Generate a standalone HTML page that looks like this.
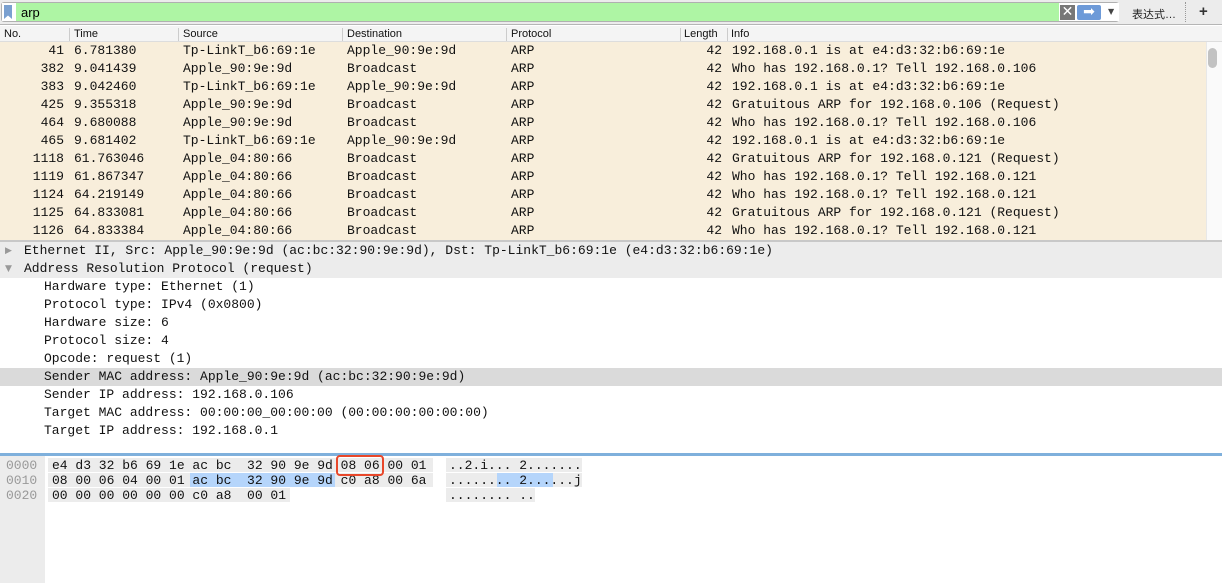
<!DOCTYPE html>
<html><head><meta charset="utf-8">
<style>
*{margin:0;padding:0;box-sizing:border-box}
body{width:1222px;height:583px;overflow:hidden;background:#fff;position:relative;font-family:"Liberation Mono",monospace;font-size:13px;color:#111}
.a{position:absolute;white-space:pre}
.s{font-family:"Liberation Sans","Noto Sans CJK SC",sans-serif;font-size:11px}
.row{position:absolute;left:0;width:1206px;height:18px;line-height:18px;background:#f8eedb}
.row span{position:absolute;white-space:pre}
.d{position:absolute;left:0;width:1222px;height:18px;line-height:18px;white-space:pre}
.hx{position:absolute;height:15px;line-height:15px;white-space:pre}
</style></head><body>
<!-- toolbar -->
<div class="a" style="left:0;top:0;width:1222px;height:25px;background:#ececec;border-bottom:1px solid #b5b5b5"></div>
<div class="a" style="left:1px;top:2px;width:1118px;height:20px;background:#aef5a4;border:1px solid #b0b0b0;border-radius:3px"></div>
<div class="a" style="left:2px;top:3px;width:14px;height:18px;background:#fff"></div>
<div class="a" style="left:4px;top:5px;width:8px;height:14px;background:#7aa0d0;clip-path:polygon(0 0,100% 0,100% 100%,50% 75%,0 100%)"></div>
<div class="a s" style="left:21px;top:5px;font-size:13px;color:#000">arp</div>
<div class="a" style="left:1059px;top:3px;width:60px;height:18px;background:#fff"></div>
<div class="a" style="left:1060px;top:5px;width:15px;height:15px;background:#777;color:#fff;font-family:'DejaVu Sans';font-size:14px;line-height:15px;text-align:center">✕</div>
<div class="a" style="left:1077px;top:5px;width:24px;height:15px;background:#6d9ad8;border-radius:2px;color:#fff;font-size:14px;line-height:14px;text-align:center;font-family:'DejaVu Sans'">➡</div>
<div class="a" style="left:1108px;top:7px;font-size:8px;color:#444;font-family:'DejaVu Sans'">▼</div>
<div class="a s" style="left:1132px;top:6px;font-size:11px;color:#222">表达式…</div>
<div class="a" style="left:1185px;top:2px;height:20px;border-left:1px dotted #999"></div>
<div class="a s" style="left:1199px;top:3px;font-size:15px;font-weight:bold;color:#333">+</div>
<!-- header -->
<div class="a" style="left:0;top:26px;width:1222px;height:16px;background:#f4f4f4;border-bottom:1px solid #ddd"></div>
<div class="a s" style="left:4px;top:28px">No.</div>
<div class="a s" style="left:74px;top:28px">Time</div>
<div class="a s" style="left:183px;top:28px">Source</div>
<div class="a s" style="left:347px;top:28px">Destination</div>
<div class="a s" style="left:511px;top:28px">Protocol</div>
<div class="a s" style="left:684px;top:28px">Length</div>
<div class="a s" style="left:731px;top:28px">Info</div>
<div class="a" style="left:69px;top:28px;height:13px;border-left:1px solid #ccc"></div>
<div class="a" style="left:178px;top:28px;height:13px;border-left:1px solid #ccc"></div>
<div class="a" style="left:342px;top:28px;height:13px;border-left:1px solid #ccc"></div>
<div class="a" style="left:506px;top:28px;height:13px;border-left:1px solid #ccc"></div>
<div class="a" style="left:680px;top:28px;height:13px;border-left:1px solid #ccc"></div>
<div class="a" style="left:727px;top:28px;height:13px;border-left:1px solid #ccc"></div>
<!-- rows -->
<div class="a" style="left:0;top:42px;width:1206px;height:198px;background:#f8eedb"></div>
<div class="row" style="top:42px"><span style="right:1142px">41</span><span style="left:74px">6.781380</span><span style="left:183px">Tp-LinkT_b6:69:1e</span><span style="left:347px">Apple_90:9e:9d</span><span style="left:511px">ARP</span><span style="right:484px">42</span><span style="left:732px">192.168.0.1 is at e4:d3:32:b6:69:1e</span></div>
<div class="row" style="top:60px"><span style="right:1142px">382</span><span style="left:74px">9.041439</span><span style="left:183px">Apple_90:9e:9d</span><span style="left:347px">Broadcast</span><span style="left:511px">ARP</span><span style="right:484px">42</span><span style="left:732px">Who has 192.168.0.1? Tell 192.168.0.106</span></div>
<div class="row" style="top:78px"><span style="right:1142px">383</span><span style="left:74px">9.042460</span><span style="left:183px">Tp-LinkT_b6:69:1e</span><span style="left:347px">Apple_90:9e:9d</span><span style="left:511px">ARP</span><span style="right:484px">42</span><span style="left:732px">192.168.0.1 is at e4:d3:32:b6:69:1e</span></div>
<div class="row" style="top:96px"><span style="right:1142px">425</span><span style="left:74px">9.355318</span><span style="left:183px">Apple_90:9e:9d</span><span style="left:347px">Broadcast</span><span style="left:511px">ARP</span><span style="right:484px">42</span><span style="left:732px">Gratuitous ARP for 192.168.0.106 (Request)</span></div>
<div class="row" style="top:114px"><span style="right:1142px">464</span><span style="left:74px">9.680088</span><span style="left:183px">Apple_90:9e:9d</span><span style="left:347px">Broadcast</span><span style="left:511px">ARP</span><span style="right:484px">42</span><span style="left:732px">Who has 192.168.0.1? Tell 192.168.0.106</span></div>
<div class="row" style="top:132px"><span style="right:1142px">465</span><span style="left:74px">9.681402</span><span style="left:183px">Tp-LinkT_b6:69:1e</span><span style="left:347px">Apple_90:9e:9d</span><span style="left:511px">ARP</span><span style="right:484px">42</span><span style="left:732px">192.168.0.1 is at e4:d3:32:b6:69:1e</span></div>
<div class="row" style="top:150px"><span style="right:1142px">1118</span><span style="left:74px">61.763046</span><span style="left:183px">Apple_04:80:66</span><span style="left:347px">Broadcast</span><span style="left:511px">ARP</span><span style="right:484px">42</span><span style="left:732px">Gratuitous ARP for 192.168.0.121 (Request)</span></div>
<div class="row" style="top:168px"><span style="right:1142px">1119</span><span style="left:74px">61.867347</span><span style="left:183px">Apple_04:80:66</span><span style="left:347px">Broadcast</span><span style="left:511px">ARP</span><span style="right:484px">42</span><span style="left:732px">Who has 192.168.0.1? Tell 192.168.0.121</span></div>
<div class="row" style="top:186px"><span style="right:1142px">1124</span><span style="left:74px">64.219149</span><span style="left:183px">Apple_04:80:66</span><span style="left:347px">Broadcast</span><span style="left:511px">ARP</span><span style="right:484px">42</span><span style="left:732px">Who has 192.168.0.1? Tell 192.168.0.121</span></div>
<div class="row" style="top:204px"><span style="right:1142px">1125</span><span style="left:74px">64.833081</span><span style="left:183px">Apple_04:80:66</span><span style="left:347px">Broadcast</span><span style="left:511px">ARP</span><span style="right:484px">42</span><span style="left:732px">Gratuitous ARP for 192.168.0.121 (Request)</span></div>
<div class="row" style="top:222px"><span style="right:1142px">1126</span><span style="left:74px">64.833384</span><span style="left:183px">Apple_04:80:66</span><span style="left:347px">Broadcast</span><span style="left:511px">ARP</span><span style="right:484px">42</span><span style="left:732px">Who has 192.168.0.1? Tell 192.168.0.121</span></div>
<!-- scrollbar -->
<div class="a" style="left:1206px;top:42px;width:16px;height:198px;background:#fafafa;border-left:1px solid #e8e8e8"></div>
<div class="a" style="left:1208px;top:48px;width:9px;height:20px;background:#c2c2c2;border-radius:5px"></div>
<!-- separator -->
<div class="a" style="left:0;top:240px;width:1222px;height:2px;background:#c8c8c8"></div>
<!-- details -->
<div class="d" style="top:242px;background:#ececec"><span style="position:absolute;left:5px;font-size:9px;color:#999;font-family:'DejaVu Sans'">▶</span><span style="position:absolute;left:24px">Ethernet II, Src: Apple_90:9e:9d (ac:bc:32:90:9e:9d), Dst: Tp-LinkT_b6:69:1e (e4:d3:32:b6:69:1e)</span></div>
<div class="d" style="top:260px;background:#ececec"><span style="position:absolute;left:5px;font-size:9px;color:#999;font-family:'DejaVu Sans'">▼</span><span style="position:absolute;left:24px">Address Resolution Protocol (request)</span></div>
<div class="d" style="top:278px"><span style="position:absolute;left:44px">Hardware type: Ethernet (1)</span></div>
<div class="d" style="top:296px"><span style="position:absolute;left:44px">Protocol type: IPv4 (0x0800)</span></div>
<div class="d" style="top:314px"><span style="position:absolute;left:44px">Hardware size: 6</span></div>
<div class="d" style="top:332px"><span style="position:absolute;left:44px">Protocol size: 4</span></div>
<div class="d" style="top:350px"><span style="position:absolute;left:44px">Opcode: request (1)</span></div>
<div class="d" style="top:368px;background:#dadada"><span style="position:absolute;left:44px">Sender MAC address: Apple_90:9e:9d (ac:bc:32:90:9e:9d)</span></div>
<div class="d" style="top:386px"><span style="position:absolute;left:44px">Sender IP address: 192.168.0.106</span></div>
<div class="d" style="top:404px"><span style="position:absolute;left:44px">Target MAC address: 00:00:00_00:00:00 (00:00:00:00:00:00)</span></div>
<div class="d" style="top:422px"><span style="position:absolute;left:44px">Target IP address: 192.168.0.1</span></div>
<!-- hex pane -->
<div class="a" style="left:0;top:453px;width:1222px;height:3px;background:#7fb0dc"></div>
<div class="a" style="left:0;top:456px;width:45px;height:127px;background:#ececec"></div>
<div class="hx" style="left:6px;top:458px;color:#999">0000</div>
<div class="hx" style="left:6px;top:473px;color:#999">0010</div>
<div class="hx" style="left:6px;top:488px;color:#999">0020</div>
<div class="hx" style="left:48px;top:458px;width:385px;height:14px;background:#ececec"></div>
<div class="hx" style="left:48px;top:473px;width:385px;height:14px;background:#ececec"></div>
<div class="hx" style="left:48px;top:488px;width:242px;height:14px;background:#ececec"></div>
<div class="hx" style="left:190px;top:473px;width:145px;height:14px;background:#b5d5fb"></div>
<div class="hx" style="left:52px;top:458px">e4 d3 32 b6 69 1e ac bc  32 90 9e 9d 08 06 00 01</div>
<div class="hx" style="left:52px;top:473px">08 00 06 04 00 01 ac bc  32 90 9e 9d c0 a8 00 6a</div>
<div class="hx" style="left:52px;top:488px">00 00 00 00 00 00 c0 a8  00 01</div>
<div class="a" style="left:336px;top:455px;width:48px;height:21px;border:2px solid #e8472a;border-radius:4px"></div>
<div class="hx" style="left:446px;top:458px;width:136px;height:14px;background:#ececec"></div>
<div class="hx" style="left:446px;top:473px;width:136px;height:14px;background:#ececec"></div>
<div class="hx" style="left:446px;top:488px;width:89px;height:14px;background:#ececec"></div>
<div class="hx" style="left:497px;top:473px;width:56px;height:14px;background:#b5d5fb"></div>
<div class="hx" style="left:449px;top:458px">..2.i... 2.......</div>
<div class="hx" style="left:449px;top:473px">........ 2......j</div>
<div class="hx" style="left:449px;top:488px">........ ..</div>
</body></html>
